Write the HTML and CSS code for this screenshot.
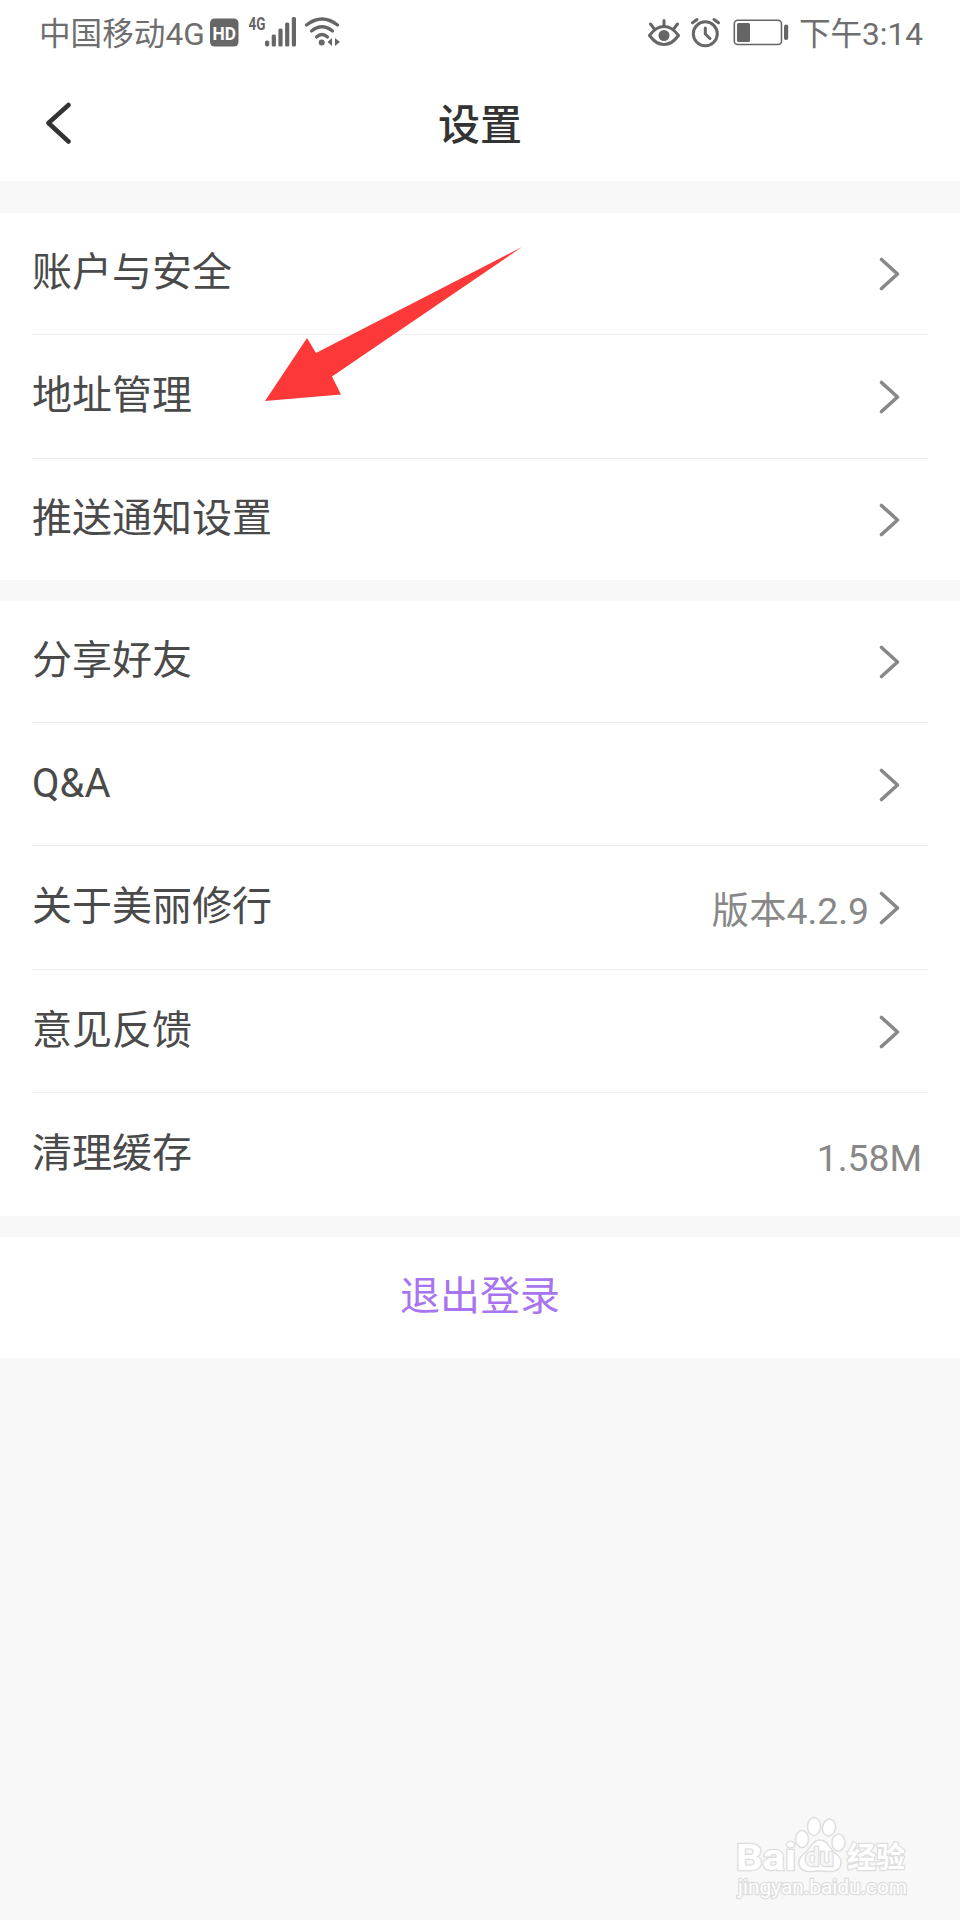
FILE: index.html
```html
<!DOCTYPE html>
<html lang="zh-CN">
<head>
    <meta charset="UTF-8">
    <meta name="viewport" content="width=device-width, initial-scale=1.0">
    <title>设置</title>
    <link rel="stylesheet" href="styles.css">
</head>
<body>
    <svg class="defs" width="0" height="0">
        <symbol id="chevron" viewBox="0 0 24 40">
            <path d="M4.5 5.5 L20.5 20 L4.5 34.5" fill="none" stroke="#888" stroke-width="3.6" stroke-linecap="round" stroke-linejoin="round"/>
        </symbol>
    </svg>

    <div class="status-bar">
        <div class="status-left">
            <span>中国移动4G</span>
            <!-- HD, signal, wifi -->
            <svg width="132" height="36" viewBox="209 14 132 36" fill="#666">
                <rect x="210" y="18.5" width="28.5" height="28" rx="4.5"/>
                <text class="hd" x="212.5" y="39.5" textLength="23.5" lengthAdjust="spacingAndGlyphs">HD</text>
                <text class="net" x="248.5" y="30" textLength="17" lengthAdjust="spacingAndGlyphs">4G</text>
                <rect x="265" y="40.5" width="4.2" height="6" rx="1.8"/>
                <rect x="271.7" y="34.5" width="4.2" height="12" rx="1.5"/>
                <rect x="278.4" y="28.5" width="4.2" height="18" rx="1.5"/>
                <rect x="285.1" y="22.5" width="4.2" height="24" rx="1.5"/>
                <rect x="291.8" y="17" width="4.2" height="29.5" rx="1.5"/>
                <g fill="none" stroke="#666" stroke-width="3.2" stroke-linecap="round">
                    <path d="M306.5 25 Q322 13 337.5 25"/>
                    <path d="M311.5 31 Q322 22.5 332.5 31"/>
                    <path d="M316.5 37 Q322 32 327.5 37"/>
                </g>
                <circle cx="321.7" cy="42.5" r="3"/>
                <path d="M332 38 V46 L327.5 42Z M335 38 V46 L340 42Z"/>
            </svg>
        </div>
        <div class="status-right">
            <!-- eye, alarm, battery -->
            <svg width="144" height="36" viewBox="646 14 144 36" fill="none" stroke="#666" stroke-linecap="round" stroke-linejoin="round">
                <path d="M649.5 35.5 Q656 26.5 664 26.5 Q672 26.5 678.5 35.5 Q672 44.5 664 44.5 Q656 44.5 649.5 35.5Z" stroke-width="3"/>
                <circle cx="664" cy="35.5" r="5.5" fill="#666" stroke="none"/>
                <path d="M664 26 V20.5 M654 28.5 L650.5 24 M674 28.5 L677.5 24" stroke-width="3"/>
                <circle cx="705.3" cy="33.8" r="12" stroke-width="3"/>
                <path d="M705.3 28 V34 L710 38.5" stroke-width="3"/>
                <path d="M692.5 22.8 L697 19.5 M718.5 22.8 L714 19.5" stroke-width="3"/>
                <rect x="734.3" y="20.3" width="47.2" height="24.2" rx="3.5" stroke-width="1.6"/>
                <rect x="737" y="23" width="13" height="19" rx="1.5" fill="#666" stroke="none"/>
                <rect x="784" y="24.5" width="4.2" height="15.5" rx="2" fill="#666" stroke="none"/>
            </svg>
            <span>下午3:14</span>
        </div>
    </div>

    <div class="header">
        <svg class="back" width="28" height="44" viewBox="0 0 28 44">
            <path d="M25.5 3 L5.500 21 L25.500 39.500" fill="none" stroke="#333" stroke-width="4.5" stroke-linecap="round" stroke-linejoin="round"/>
        </svg>
        <h1>设置</h1>
    </div>

    <div class="group account">
        <div class="row"><span>账户与安全</span><svg class="arrow"><use href="#chevron"/></svg></div>
        <div class="row"><span>地址管理</span><svg class="arrow"><use href="#chevron"/></svg></div>
        <div class="row"><span>推送通知设置</span><svg class="arrow"><use href="#chevron"/></svg></div>
    </div>

    <div class="group more">
        <div class="row"><span>分享好友</span><svg class="arrow"><use href="#chevron"/></svg></div>
        <div class="row"><span>Q&amp;A</span><svg class="arrow"><use href="#chevron"/></svg></div>
        <div class="row"><span>关于美丽修行</span><span class="value">版本4.2.9</span><svg class="arrow"><use href="#chevron"/></svg></div>
        <div class="row"><span>意见反馈</span><svg class="arrow"><use href="#chevron"/></svg></div>
        <div class="row"><span>清理缓存</span><span class="value size">1.58M</span></div>
    </div>

    <div class="logout">退出登录</div>

    <svg class="pointer" width="260" height="156" viewBox="263 246 260 156">
        <path d="M265 401 L307 338 L316 353 L522 247 L332 376.5 L341 394.5Z" fill="#fc3838"/>
    </svg>

    <svg class="watermark" width="180" height="90" viewBox="730 1812 180 90">
        <g fill="#fff" stroke="#dedede" stroke-width="1.5">
            <text class="logo" x="736" y="1870" textLength="60" lengthAdjust="spacingAndGlyphs">Bai</text>
            <ellipse cx="802" cy="1839" rx="6.5" ry="8.5"/>
            <ellipse cx="814" cy="1826.5" rx="6.5" ry="9"/>
            <ellipse cx="829" cy="1827.5" rx="6.5" ry="8.5" transform="rotate(12 829 1827.5)"/>
            <ellipse cx="838.5" cy="1842.5" rx="6.5" ry="8.5"/>
            <path d="M820 1840 C827 1840 829 1847 834 1852 C840 1857 843 1861 840 1867 C836 1874 827 1871 820 1871 C813 1871 804 1874 800 1867 C797 1861 800 1857 806 1852 C811 1847 813 1840 820 1840Z"/>
            <text class="du" x="805" y="1866" textLength="29" lengthAdjust="spacingAndGlyphs">du</text>
            <text class="cn" x="847" y="1868" textLength="58" lengthAdjust="spacingAndGlyphs">经验</text>
            <text class="url" x="738" y="1894" textLength="169" lengthAdjust="spacingAndGlyphs">jingyan.baidu.com</text>
        </g>
    </svg>
</body>
</html>
```
FILE: styles.css
```css
* {
    box-sizing: border-box;
}

body {
    position: relative;
    margin: 0;
    min-height: 1920px;
    background-color: #f8f8f8;
    font-family: Roboto, "Noto Sans CJK SC", sans-serif;
    color: #4a4a4a;
}

.defs {
    display: block;
}

.status-bar {
    display: flex;
    justify-content: space-between;
    height: 66px;
    padding: 0 37px 0 39px;
    background-color: #fff;
    color: #6e6e6e;
    font-size: 31.6px;
    font-weight: 400;
}

.status-left,
.status-right {
    display: flex;
    align-items: center;
    white-space: nowrap;
}

.status-left span,
.status-right span {
    padding-bottom: 4px;
}

.status-left {
    gap: 4px;
}

.status-right {
    gap: 9px;
}

.status-left svg,
.status-right svg {
    margin-bottom: 2px;
}

.hd {
    font-size: 19px;
    font-weight: 700;
    fill: #fff;
}

.net {
    font-size: 18px;
    font-weight: 700;
}

.header {
    display: flex;
    align-items: center;
    height: 115px;
    padding: 0 43px;
    background-color: #fff;
    margin-bottom: 32px;
}

.header h1 {
    flex: 1;
    margin: 0 28px 0 0;
    padding-top: 4px;
    text-align: center;
    font-size: 42px;
    font-weight: 500;
    line-height: 60px;
    color: #333;
}

.group {
    background-color: #fff;
    padding: 0 32px;
    margin-bottom: 21px;
}

.row {
    display: flex;
    align-items: center;
    height: 123px;
    padding-bottom: 1px;
    border-bottom: 1px solid #f0f0f0;
    font-size: 40px;
    line-height: 60px;
}

.row:last-child {
    border-bottom: none;
}

.account .row:first-child,
.more .row:first-child {
    height: 122px;
}

.account .row:nth-child(2),
.more .row:nth-child(3) {
    height: 124px;
}

.account .row:last-child {
    height: 121px;
}

.row span:first-child {
    flex: 1;
}

.row .value {
    color: #888;
    font-size: 37.3px;
    padding-top: 7px;
}

.row .size {
    margin-right: 6px;
}

.arrow {
    width: 24px;
    height: 40px;
    margin: 2px 27px 0 8px;
}

.logout {
    height: 121px;
    background-color: #fff;
    text-align: center;
    font-size: 40px;
    line-height: 119px;
    color: #a974ef;
}

.pointer {
    position: absolute;
    left: 263px;
    top: 246px;
}

.watermark {
    position: absolute;
    left: 730px;
    top: 1812px;
}

.watermark text {
    paint-order: stroke;
    stroke-width: 2.5px;
}

.logo {
    font-size: 37px;
    font-weight: 700;
}

.watermark .du {
    font-size: 26px;
    font-weight: 500;
    fill: #f6f6f6;
    stroke-width: 2.5px;
}

.cn {
    font-size: 29px;
    font-weight: 700;
}

.url {
    font-family: Roboto, sans-serif;
    font-size: 19.5px;
}
```
